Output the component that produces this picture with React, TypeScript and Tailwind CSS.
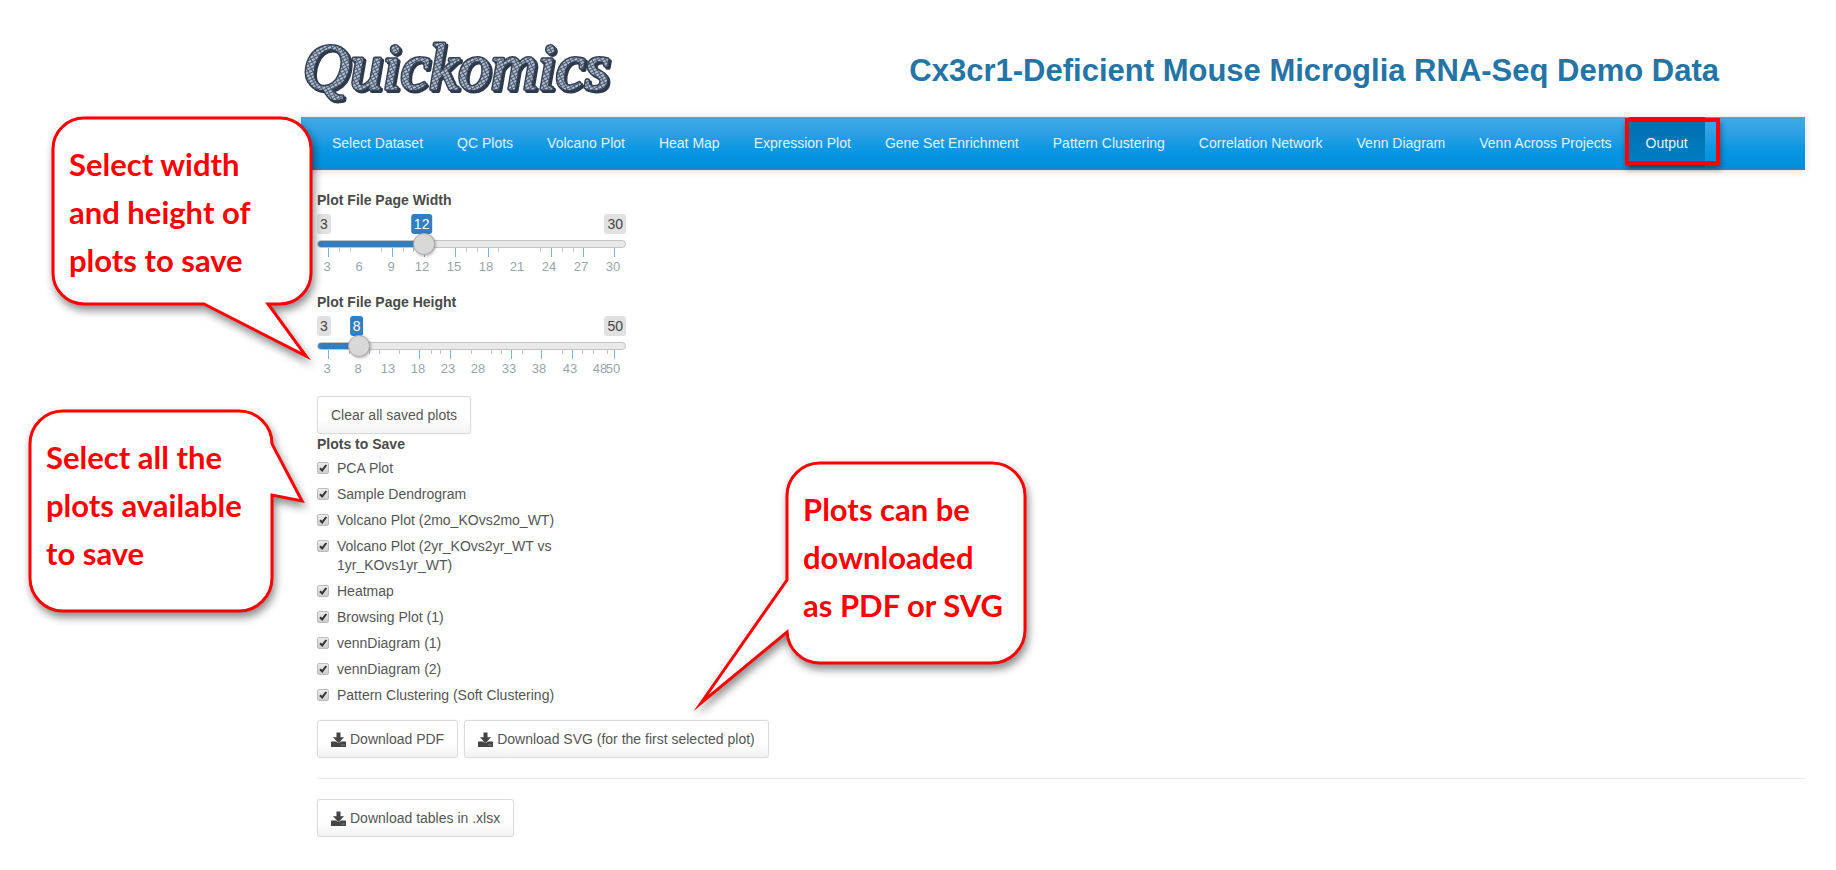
import { useState } from "react";

const navItems = [
  "Select Dataset",
  "QC Plots",
  "Volcano Plot",
  "Heat Map",
  "Expression Plot",
  "Gene Set Enrichment",
  "Pattern Clustering",
  "Correlation Network",
  "Venn Diagram",
  "Venn Across Projects",
  "Output",
];

const plots = [
  "PCA Plot",
  "Sample Dendrogram",
  "Volcano Plot (2mo_KOvs2mo_WT)",
  "Volcano Plot (2yr_KOvs2yr_WT vs 1yr_KOvs1yr_WT)",
  "Heatmap",
  "Browsing Plot (1)",
  "vennDiagram (1)",
  "vennDiagram (2)",
  "Pattern Clustering (Soft Clustering)",
];

type Scale = {
  major: number[];
  minor: number[];
  labels: [number, string][];
};

const widthScale: Scale = {
  major: [11, 75, 107, 138, 171, 234, 266, 297],
  minor: [22, 33, 64, 86, 96, 149, 160, 181, 223, 245, 256],
  labels: [[10, "3"], [42, "6"], [74, "9"], [105, "12"], [137, "15"], [169, "18"], [200, "21"], [232, "24"], [264, "27"], [296, "30"]],
};

const heightScale: Scale = {
  major: [11, 102, 133, 194, 224, 255, 297],
  minor: [32, 52, 62, 82, 114, 123, 154, 174, 184, 205, 245, 265, 276, 290],
  labels: [[10, "3"], [41, "8"], [71, "13"], [101, "18"], [131, "23"], [161, "28"], [192, "33"], [222, "38"], [253, "43"], [283, "48"], [296, "50"]],
};

function RangeField({ id, label, min, max, initial, scale }: { id: string; label: string; min: number; max: number; initial: number; scale: Scale }) {
  const [value, setValue] = useState(initial);
  const fraction = (value - min) / (max - min);
  const center = `calc(11px + (100% - 22px) * ${fraction})`;
  return (
    <div className="w-[309px]">
      <label htmlFor={id} className="block font-bold leading-5 text-[#4a4a4a]">{label}</label>
      <div className="relative mt-1 flex h-5 justify-between leading-5 text-[#444]">
        <span className="rounded-[3px] bg-[#e1e1e1] px-[3px]">{min}</span>
        <output
          htmlFor={id}
          className="absolute -translate-x-1/2 rounded-[3px] bg-[#337ebf] px-[3px] text-white"
          style={{ left: `calc(9px + (100% - 22px) * ${fraction})` }}
        >
          {value}
        </output>
        <span className="rounded-[3px] bg-[#e1e1e1] px-[3px]">{max}</span>
      </div>
      <div className="relative mt-[6px]">
        <svg viewBox="0 0 309 36" className="block w-full" aria-hidden="true">
          {scale.major.map((x) => <rect key={x} x={x} y="7" width="1" height="10" fill="#7db3e3" />)}
          {scale.minor.map((x) => <rect key={x} x={x} y="7" width="1" height="5" fill="#c4c4c4" />)}
          {scale.labels.map(([x, text]) => (
            <text key={text} x={x} y="31" textAnchor="middle" fontSize="13" fill="#98a5ae">{text}</text>
          ))}
        </svg>
        <input
          id={id}
          type="range"
          min={min}
          max={max}
          value={value}
          onChange={(e) => setValue(Number(e.target.value))}
          className="absolute inset-x-0 top-0 m-0 block h-2 w-full appearance-none rounded-full border border-[#c4c4c4] bg-[#e9e9e9] [&::-webkit-slider-thumb]:size-[22px] [&::-webkit-slider-thumb]:appearance-none [&::-webkit-slider-thumb]:rounded-full [&::-webkit-slider-thumb]:border [&::-webkit-slider-thumb]:border-[#aaa] [&::-webkit-slider-thumb]:bg-[#d8d8d8] [&::-webkit-slider-thumb]:shadow-[1px_1px_3px_rgba(0,0,0,0.3)]"
          style={{ background: `linear-gradient(to right, #337ebf ${center}, #e9e9e9 ${center}) border-box` }}
        />
      </div>
    </div>
  );
}

function DownloadIcon() {
  return (
    <svg viewBox="0 0 15 15" className="h-[15px] w-[15px]" fill="#444" aria-hidden="true">
      <rect x="0" y="9.500" width="15" height="5.500" rx="0.500" />
      <path d="M5.500 0.500h4v4.700h3.600L7.500 11 1.900 5.200h3.600z" stroke="#fafafa" strokeWidth="1" paintOrder="stroke" />
      <rect x="10.500" y="12.500" width="1" height="1" fill="#bbb" />
      <rect x="12.500" y="12.500" width="1" height="1" fill="#bbb" />
    </svg>
  );
}

function Button({ children, download = false }: { children: string; download?: boolean }) {
  return (
    <button
      type="button"
      className="flex h-[38px] items-center gap-1 rounded-[3px] border border-[#dcdcdc] bg-linear-to-b from-white from-60% to-[#f2f2f2] px-[13px] text-[#555] shadow-[0_0_1px_#ccc]"
    >
      {download && <DownloadIcon />}
      {children}
    </button>
  );
}

function PlotOption({ name }: { name: string }) {
  return (
    <label className="flex items-start gap-2 leading-[19px]">
      <span className="mt-[3px] grid shrink-0">
        <input
          type="checkbox"
          defaultChecked
          className="peer col-start-1 row-start-1 size-3 appearance-none rounded-[2px] border border-[#bcbcbc] bg-linear-to-b from-[#ececec] to-[#cecece]"
        />
        <svg viewBox="0 0 12 12" className="pointer-events-none invisible col-start-1 row-start-1 size-3 peer-checked:visible" fill="none" stroke="#333" strokeWidth="2" aria-hidden="true">
          <path d="M3 6.200l2.200 2.200L9.300 3" />
        </svg>
      </span>
      <span>{name}</span>
    </label>
  );
}

function Callout({ place, path, size, lines }: { place: string; path: string; size: [number, number]; lines: string[] }) {
  return (
    <aside className={`absolute ${place}`}>
      <svg
        width={size[0]}
        height={size[1]}
        className="overflow-visible drop-shadow-[2px_5px_4px_rgba(0,0,0,0.45)]"
        fill="white"
        stroke="#f00"
        strokeWidth="3"
        strokeMiterlimit="10"
        aria-hidden="true"
      >
        <path d={path} />
      </svg>
      <p className="absolute left-4 top-[22px] whitespace-nowrap font-['Lato',sans-serif] text-[31px] font-bold leading-12 text-[#f00]">
        {lines.map((line) => <span key={line} className="block">{line}</span>)}
      </p>
    </aside>
  );
}

export default function App() {
  return (
    <div className="relative min-h-screen overflow-hidden bg-white font-['Liberation_Sans',Arial,sans-serif] text-sm text-[#555]">
      <div className="ml-[301px] mr-[31px]">
        <header className="flex h-[117px] items-center justify-between pr-[86px]">
          <svg width="312" height="90" className="overflow-visible" role="img" aria-label="Quickomics">
            <defs>
              <pattern id="rope" width="4" height="3" patternUnits="userSpaceOnUse" patternTransform="rotate(-28)">
                <rect width="4" height="3" fill="#4b5a70" />
                <rect width="3" height="2" fill="#b4bfcf" />
              </pattern>
            </defs>
            <g fontFamily="'Liberation Serif', serif" fontStyle="italic" fontSize="65" strokeLinejoin="round">
              <text x="4" y="77" fill="#2c394b" stroke="#2c394b" strokeWidth="4" aria-hidden="true">Quickomics</text>
              <text x="2" y="75" fill="#334155" stroke="#334155" strokeWidth="4" aria-hidden="true">Quickomics</text>
              <text x="2" y="75" fill="url(#rope)" stroke="url(#rope)" strokeWidth="1">Quickomics</text>
            </g>
          </svg>
          <h1 className="mt-6 whitespace-nowrap text-[31px] font-bold leading-9 text-[#2474a5]">
            Cx3cr1-Deficient Mouse Microglia RNA-Seq Demo Data
          </h1>
        </header>

        <nav className="flex h-[53px] border-b-2 border-[#2386c8] bg-linear-to-b from-[#41aae6] via-[#0c98e2] via-60% to-[#008fde] px-[14px] shadow-[0_1px_8px_rgba(0,0,0,0.15)]">
          {navItems.map((item) =>
            item === "Output" ? (
              <a key={item} href="#output" aria-current="page" className="relative flex items-center bg-linear-to-b from-[#006eae] to-[#007fc5] px-[17px] text-[#e6f3fb]">
                {item}
                <span className="absolute -left-1 top-px h-[47px] w-[95px] border-4 border-[#f00] shadow-[1px_4px_6px_rgba(0,0,0,0.4)]" />
              </a>
            ) : (
              <a key={item} href={`#${item.toLowerCase().replaceAll(" ", "-")}`} className="flex items-center whitespace-nowrap px-[17px] text-[#e0f1fb]">
                {item}
              </a>
            ),
          )}
        </nav>

        <main className="pl-4 pt-5">
          <RangeField id="page-width" label="Plot File Page Width" min={3} max={30} initial={12} scale={widthScale} />
          <div className="mt-4">
            <RangeField id="page-height" label="Plot File Page Height" min={3} max={50} initial={8} scale={heightScale} />
          </div>

          <div className="mt-[18px]">
            <Button>Clear all saved plots</Button>
          </div>

          <fieldset className="w-[300px]">
            <legend className="font-bold leading-5 text-[#4a4a4a]">Plots to Save</legend>
            <div className="mt-[5px] flex flex-col gap-[7px]">
              {plots.map((plot) => <PlotOption key={plot} name={plot} />)}
            </div>
          </fieldset>

          <div className="mt-[15px] flex gap-[6px]">
            <Button download>Download PDF</Button>
            <Button download>Download SVG (for the first selected plot)</Button>
          </div>

          <hr className="my-5 border-[#ebebeb]" />

          <div className="flex">
            <Button download>Download tables in .xlsx</Button>
          </div>
        </main>
      </div>

      <Callout
        place="left-[53px] top-[118px]"
        size={[258, 242]}
        path="M31 0H227A31 31 0 0 1 258 31V155A31 31 0 0 1 227 186H215L253 238L151 186H31A31 31 0 0 1 0 155V31A31 31 0 0 1 31 0Z"
        lines={["Select width", "and height of", "plots to save"]}
      />
      <Callout
        place="left-[30px] top-[411px]"
        size={[274, 200]}
        path="M33 0H209A33 33 0 0 1 242 33L272 90L242 84V167A33 33 0 0 1 209 200H33A33 33 0 0 1 0 167V33A33 33 0 0 1 33 0Z"
        lines={["Select all the", "plots available", "to save"]}
      />
      <Callout
        place="left-[787px] top-[463px]"
        size={[238, 244]}
        path="M33 0H205A33 33 0 0 1 238 33V167A33 33 0 0 1 205 200H33A33 33 0 0 1 0 169L-86 240L0 117V33A33 33 0 0 1 33 0Z"
        lines={["Plots can be", "downloaded", "as PDF or SVG"]}
      />
    </div>
  );
}
